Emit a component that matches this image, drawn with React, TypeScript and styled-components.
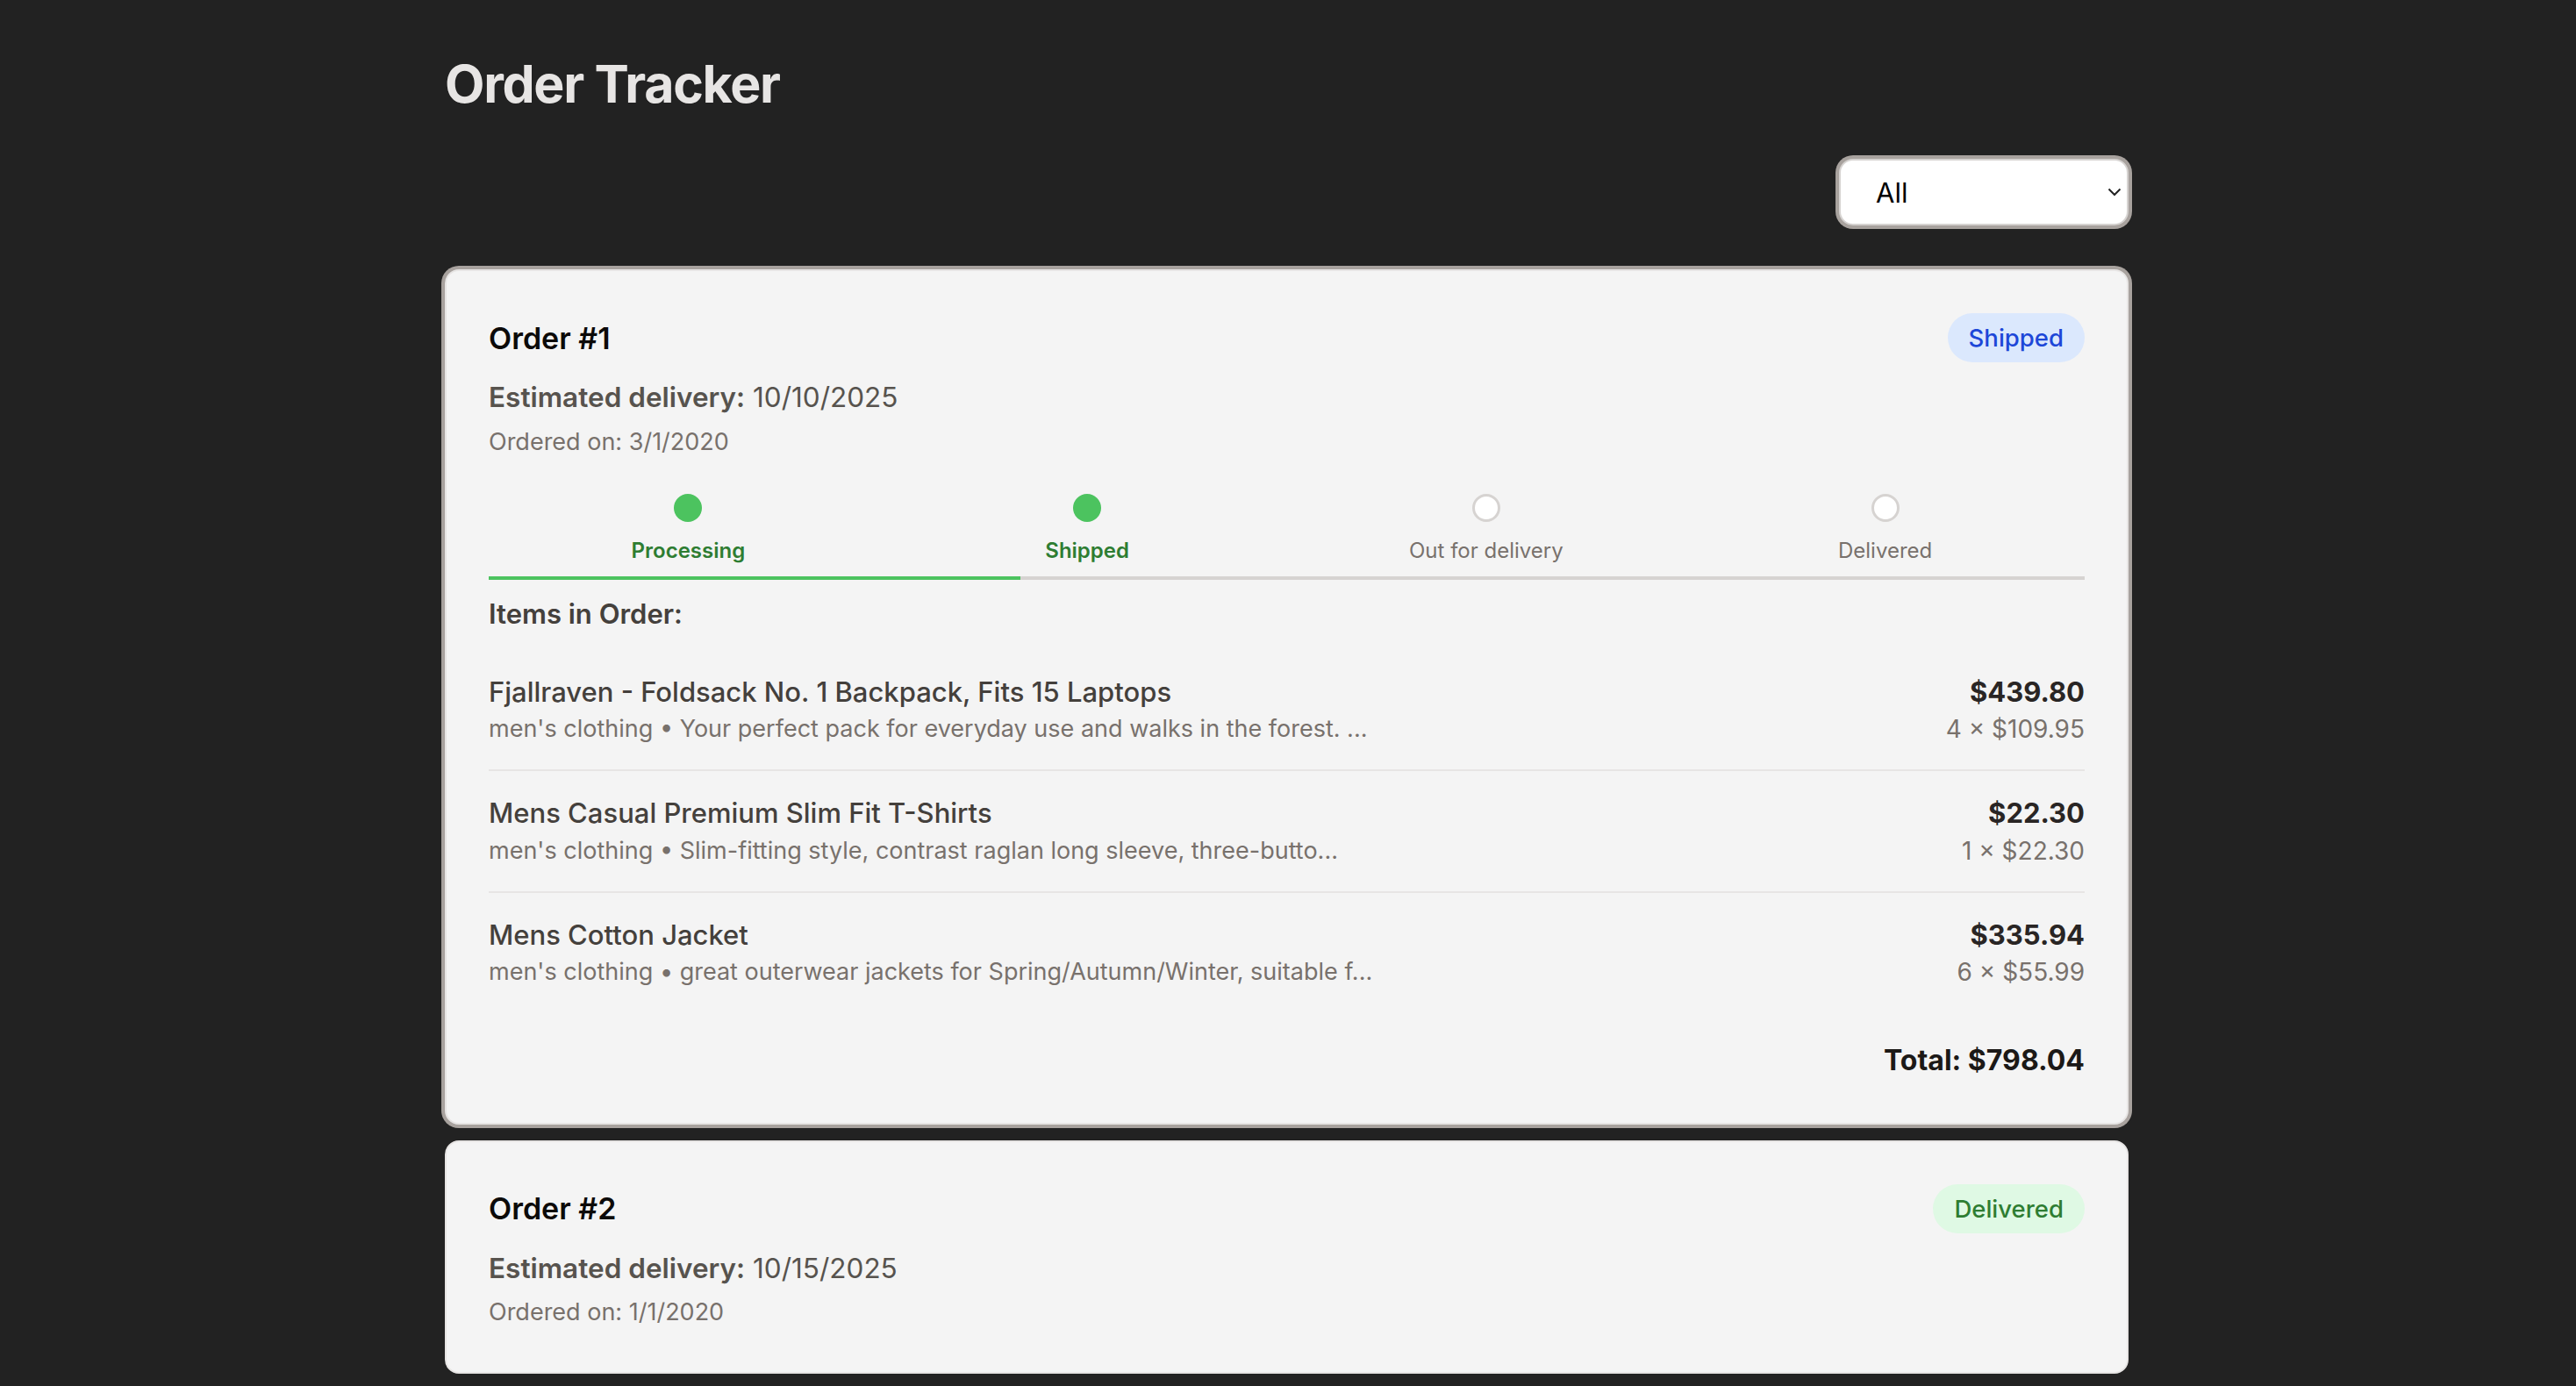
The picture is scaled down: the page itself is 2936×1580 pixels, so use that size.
import React, { useState } from 'react';
import styled, { createGlobalStyle } from 'styled-components';

const GlobalStyle = createGlobalStyle`
  body {
    margin: 0;
    background: #222222;
    font-family: Inter, "Noto Sans", sans-serif;
  }
`;

const Page = styled.div`
  box-sizing: border-box;
  max-width: 1922px;
  margin: 0 auto;
  padding: 58px 3px 60px 0;
`;

const Title = styled.h1`
  margin: 0;
  font-size: 59px;
  line-height: 1.29;
  letter-spacing: -1.3px;
  font-weight: 700;
  color: #e7e5e4;
`;

const Toolbar = styled.div`
  display: flex;
  justify-content: flex-end;
  margin: 47px 0 50px;
`;

const SelectWrap = styled.div`
  position: relative;
  width: 330px;
  height: 76px;
`;

const Select = styled.select`
  appearance: none;
  box-sizing: border-box;
  width: 100%;
  height: 100%;
  padding: 0 40px;
  border: 2px solid #d6d3d1;
  border-radius: 16px;
  box-shadow: 0 0 0 4px #a8a29e;
  background: #ffffff;
  color: #000000;
  font-family: Inter, "Noto Sans", sans-serif;
  font-size: 31px;
  outline: none;
`;

const Chevron = styled.svg`
  position: absolute;
  right: 8px;
  top: 50%;
  transform: translateY(-50%);
  pointer-events: none;
`;

const Card = styled.section<{ $active?: boolean }>`
  background: #f4f4f4;
  border: 2px solid #e7e5e4;
  border-radius: 16px;
  padding: 48px 48px 51px;
  box-shadow: ${p => (p.$active ? '0 0 0 4px #a8a29e' : 'none')};
  & + & {
    margin-top: 18px;
  }
`;

const CardHeader = styled.div`
  display: flex;
  justify-content: space-between;
  align-items: center;
  height: 56px;
`;

const OrderTitle = styled.h2`
  margin: 0;
  font-size: 34px;
  font-weight: 600;
  color: #0c0a09;
`;

const badgeColors: Record<string, { bg: string; fg: string }> = {
  Processing: { bg: '#fef3c7', fg: '#b45309' },
  Shipped: { bg: '#dbe8fd', fg: '#1d47d8' },
  'Out for delivery': { bg: '#ede9fe', fg: '#6d28d9' },
  Delivered: { bg: '#dff9e4', fg: '#2e7d32' },
};

const Badge = styled.span<{ $status: string }>`
  display: inline-flex;
  align-items: center;
  height: 56px;
  padding: 0 24px;
  border-radius: 28px;
  font-size: 27.5px;
  font-weight: 500;
  background: ${p => badgeColors[p.$status].bg};
  color: ${p => badgeColors[p.$status].fg};
`;

const Delivery = styled.p`
  margin: 21px 0 0;
  font-size: 31.5px;
  line-height: 1.19;
  color: #57534e;
  strong {
    font-weight: 600;
  }
`;

const Ordered = styled.p`
  margin: 16px 0 0;
  font-size: 27px;
  line-height: 1.21;
  color: #78716c;
`;

const Stepper = styled.div`
  margin-top: 43px;
`;

const Steps = styled.div`
  display: grid;
  grid-template-columns: repeat(4, 1fr);
`;

const Step = styled.div`
  display: flex;
  flex-direction: column;
  align-items: center;
`;

const Dot = styled.span<{ $done: boolean }>`
  box-sizing: border-box;
  width: 32px;
  height: 32px;
  border-radius: 50%;
  background: ${p => (p.$done ? '#4cc35f' : '#ffffff')};
  border: ${p => (p.$done ? 'none' : '3px solid #d6d3d1')};
`;

const StepLabel = styled.span<{ $done: boolean }>`
  margin-top: 18px;
  font-size: 24px;
  line-height: 1.21;
  font-weight: ${p => (p.$done ? 600 : 400)};
  color: ${p => (p.$done ? '#2e7d32' : '#78716c')};
`;

const Track = styled.div`
  margin-top: 15px;
  height: 4px;
  background: #d6d3d1;
`;

const Fill = styled.div`
  height: 100%;
  background: #4cc35f;
`;

const ItemsHeading = styled.h3`
  margin: 20px 0 0;
  font-size: 31px;
  line-height: 1.21;
  font-weight: 600;
  color: #44403c;
`;

const ItemList = styled.div`
  margin-top: 22px;
`;

const ItemRow = styled.div`
  display: flex;
  justify-content: space-between;
  align-items: flex-start;
  padding: 29px 0 28px;
  border-bottom: 2px solid #e7e5e4;
  &:last-child {
    border-bottom: none;
  }
`;

const ItemInfo = styled.div`
  min-width: 0;
`;

const ItemName = styled.div`
  font-size: 31px;
  line-height: 1.21;
  font-weight: 500;
  color: #44403c;
`;

const ItemMeta = styled.div`
  margin-top: 8px;
  font-size: 27px;
  line-height: 1.21;
  color: #78716c;
  white-space: nowrap;
`;

const ItemPrices = styled.div`
  text-align: right;
`;

const Price = styled.div`
  font-size: 31px;
  line-height: 1.21;
  font-weight: 700;
  color: #292524;
`;

const Qty = styled.div`
  margin-top: 8px;
  font-size: 28px;
  line-height: 1.21;
  color: #78716c;
`;

const Total = styled.div`
  margin-top: 36px;
  text-align: right;
  font-size: 32px;
  line-height: 1.21;
  font-weight: 700;
  color: #1c1917;
`;

const STEPS = ['Processing', 'Shipped', 'Out for delivery', 'Delivered'];

type Item = { title: string; category: string; desc: string; qty: number; price: number };
type Order = { id: number; status: string; eta: string; ordered: string; items: Item[] };

const orders: Order[] = [
  {
    id: 1,
    status: 'Shipped',
    eta: '10/10/2025',
    ordered: '3/1/2020',
    items: [
      {
        title: 'Fjallraven - Foldsack No. 1 Backpack, Fits 15 Laptops',
        category: "men's clothing",
        desc: 'Your perfect pack for everyday use and walks in the forest. ...',
        qty: 4,
        price: 109.95,
      },
      {
        title: 'Mens Casual Premium Slim Fit T-Shirts',
        category: "men's clothing",
        desc: 'Slim-fitting style, contrast raglan long sleeve, three-butto...',
        qty: 1,
        price: 22.3,
      },
      {
        title: 'Mens Cotton Jacket',
        category: "men's clothing",
        desc: 'great outerwear jackets for Spring/Autumn/Winter, suitable f...',
        qty: 6,
        price: 55.99,
      },
    ],
  },
  { id: 2, status: 'Delivered', eta: '10/15/2025', ordered: '1/1/2020', items: [] },
];

const money = (n: number) => `$${n.toFixed(2)}`;

const OrderCard = ({ order, open }: { order: Order; open: boolean }) => {
  const stepIndex = STEPS.indexOf(order.status);
  const total = order.items.reduce((s, i) => s + i.qty * i.price, 0);
  return (
    <Card $active={open}>
      <CardHeader>
        <OrderTitle>Order #{order.id}</OrderTitle>
        <Badge $status={order.status}>{order.status}</Badge>
      </CardHeader>
      <Delivery>
        <strong>Estimated delivery:</strong> {order.eta}
      </Delivery>
      <Ordered>Ordered on: {order.ordered}</Ordered>
      {open && (
        <>
          <Stepper>
            <Steps>
              {STEPS.map((s, i) => (
                <Step key={s}>
                  <Dot $done={i <= stepIndex} />
                  <StepLabel $done={i <= stepIndex}>{s}</StepLabel>
                </Step>
              ))}
            </Steps>
            <Track>
              <Fill style={{ width: `${(stepIndex / (STEPS.length - 1)) * 100}%` }} />
            </Track>
          </Stepper>
          <ItemsHeading>Items in Order:</ItemsHeading>
          <ItemList>
            {order.items.map(item => (
              <ItemRow key={item.title}>
                <ItemInfo>
                  <ItemName>{item.title}</ItemName>
                  <ItemMeta>
                    {item.category} • {item.desc}
                  </ItemMeta>
                </ItemInfo>
                <ItemPrices>
                  <Price>{money(item.qty * item.price)}</Price>
                  <Qty>
                    {item.qty} × {money(item.price)}
                  </Qty>
                </ItemPrices>
              </ItemRow>
            ))}
          </ItemList>
          <Total>Total: {money(total)}</Total>
        </>
      )}
    </Card>
  );
};

export default function App() {
  const [filter, setFilter] = useState('All');
  const shown = orders.filter(o => filter === 'All' || o.status === filter);
  return (
    <>
      <GlobalStyle />
      <Page>
        <Title>Order Tracker</Title>
        <Toolbar>
          <SelectWrap>
            <Select value={filter} onChange={e => setFilter(e.target.value)}>
              <option>All</option>
              {STEPS.map(s => (
                <option key={s}>{s}</option>
              ))}
            </Select>
            <Chevron width="16" height="10" viewBox="0 0 16 10">
              <path d="M1.5 1.5l6.5 6.5 6.5-6.5" fill="none" stroke="#222" strokeWidth="2" />
            </Chevron>
          </SelectWrap>
        </Toolbar>
        {shown.map(o => (
          <OrderCard key={o.id} order={o} open={o.id === 1} />
        ))}
      </Page>
    </>
  );
}
